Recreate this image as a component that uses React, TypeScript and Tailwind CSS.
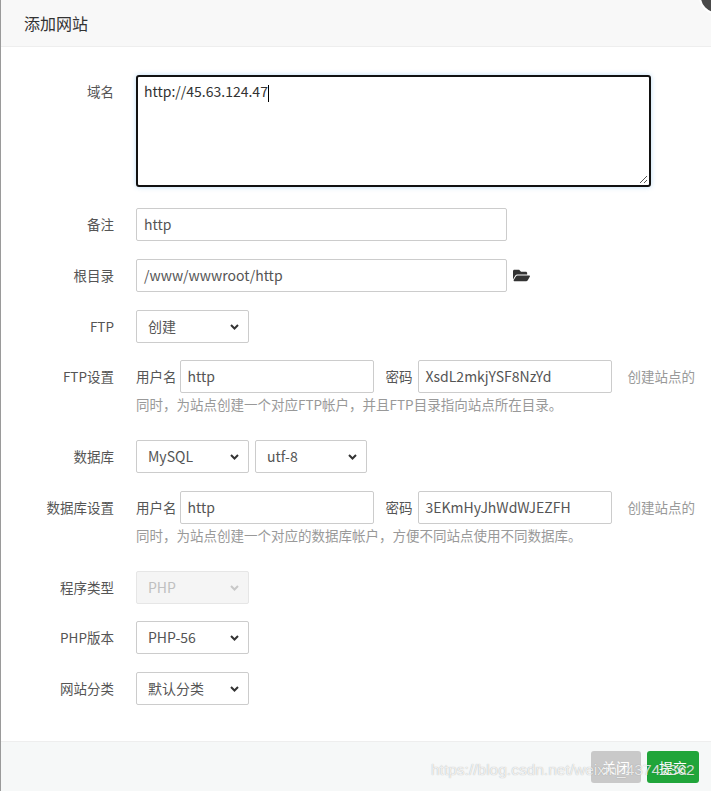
import type { ReactNode } from 'react';
import { FaFolderOpen } from 'react-icons/fa';

const font = "font-['Noto_Sans_CJK_SC','Noto_Sans',sans-serif]";

function Chevron({ muted = false }: { muted?: boolean }) {
  return (
    <svg width="9" height="6" viewBox="0 0 9 6" className="shrink-0">
      <path
        d="M1 1l3.5 3.5L8 1"
        fill="none"
        stroke={muted ? '#c8c8c8' : '#333'}
        strokeWidth="2"
      />
    </svg>
  );
}

function FakeSelect({ value, width = 'w-[113px]', disabled = false }: { value: string; width?: string; disabled?: boolean }) {
  return (
    <div
      className={`${width} h-[33px] flex items-center justify-between pl-[11px] pr-[9px] rounded-[2px] border text-[14px] ${
        disabled ? 'bg-[#f5f5f5] border-[#e6e6e6] text-[#c0c0c0]' : 'bg-white border-[#ccc] text-[#555]'
      }`}
    >
      <span>{value}</span>
      <Chevron muted={disabled} />
    </div>
  );
}

function TextInput({ value, width }: { value: string; width: string }) {
  return (
    <div className={`${width} h-[33px] flex items-center px-[7px] rounded-[2px] border border-[#ccc] bg-white text-[14px] text-[#555]`}>
      {value}
    </div>
  );
}

function Row({ label, children, className = '' }: { label: string; children: ReactNode; className?: string }) {
  return (
    <div className={`flex items-start ${className}`}>
      <div className="w-[113px] h-[33px] flex items-center justify-end text-[13.5px] text-[#555] shrink-0">{label}</div>
      <div className="ml-[22px]">{children}</div>
    </div>
  );
}

function AccountRow({ user, pass, hint }: { user: string; pass: string; hint: string }) {
  return (
    <div>
      <div className="flex items-center text-[13.5px] text-[#555]">
        <span>用户名</span>
        <div className="ml-[3px]">
          <TextInput value={user} width="w-[194px]" />
        </div>
        <span className="ml-[12px]">密码</span>
        <div className="ml-[5px]">
          <TextInput value={pass} width="w-[194px]" />
        </div>
        <span className="ml-[16px] text-[#999] whitespace-nowrap">创建站点的</span>
      </div>
      <div className="text-[13.5px] leading-[22px] text-[#999] whitespace-nowrap">{hint}</div>
    </div>
  );
}

export default function App() {
  return (
    <div className={`relative w-[711px] h-[791px] overflow-hidden bg-white border-l border-[#9a9a9a] ${font}`}>
      {/* header */}
      <div className="h-[47px] bg-[#f8f8f8] border-b border-[#eee] flex items-center pl-[23px] text-[16px] text-[#333]">
        添加网站
      </div>
      <div className="absolute -right-[22px] -top-[20px] w-[34px] h-[34px] rounded-full bg-[#4a4a4a] border-2 border-white" />

      {/* body */}
      <div className="h-[694px]">
        <Row label="域名" className="pt-[28px]">
          <div className="relative w-[515px] h-[112px] rounded-[3px] border-2 border-[#111] shadow-[0_0_5px_rgba(102,175,233,0.45)] px-[6px] pt-[4px] text-[14px] text-[#333]">
            http://45.63.124.47<span className="inline-block align-middle w-px h-[17px] bg-black" />
            <svg width="9" height="9" viewBox="0 0 9 9" className="absolute right-[1px] bottom-[1px]">
              <path d="M8 1L1 8M8 5L5 8" stroke="#555" strokeWidth="1" />
            </svg>
          </div>
        </Row>
        <Row label="备注" className="mt-[21px]">
          <TextInput value="http" width="w-[371px]" />
        </Row>
        <Row label="根目录" className="mt-[18px]">
          <div className="flex items-center">
            <TextInput value="/www/wwwroot/http" width="w-[371px]" />
            <FaFolderOpen className="ml-[6px] text-[#333]" size={17} />
          </div>
        </Row>
        <Row label="FTP" className="mt-[18px]">
          <FakeSelect value="创建" />
        </Row>
        <Row label="FTP设置" className="mt-[17px]">
          <AccountRow user="http" pass="XsdL2mkjYSF8NzYd" hint="同时，为站点创建一个对应FTP帐户，并且FTP目录指向站点所在目录。" />
        </Row>
        <Row label="数据库" className="mt-[25px]">
          <div className="flex gap-[6px]">
            <FakeSelect value="MySQL" />
            <FakeSelect value="utf-8" width="w-[112px]" />
          </div>
        </Row>
        <Row label="数据库设置" className="mt-[18px]">
          <AccountRow user="http" pass="3EKmHyJhWdWJEZFH" hint="同时，为站点创建一个对应的数据库帐户，方便不同站点使用不同数据库。" />
        </Row>
        <Row label="程序类型" className="mt-[25px]">
          <FakeSelect value="PHP" disabled />
        </Row>
        <Row label="PHP版本" className="mt-[17px]">
          <FakeSelect value="PHP-56" />
        </Row>
        <Row label="网站分类" className="mt-[18px]">
          <FakeSelect value="默认分类" />
        </Row>
      </div>

      {/* footer */}
      <div className="h-[50px] bg-[#f6f8f8] border-t border-[#eee] flex justify-end items-start pt-[9px] pr-[12px] gap-[6px]">
        <button className="w-[50px] h-[32px] rounded-[3px] bg-[#c9c9c9] text-white text-[14px]">关闭</button>
        <button className="w-[52px] h-[32px] rounded-[3px] bg-[#20a53a] text-white text-[14px]">提交</button>
      </div>

      {/* watermark */}
      <div className="absolute left-[430px] top-[758px] text-[15.5px] font-['Liberation_Sans',sans-serif] text-white/80 [text-shadow:0_0_1px_rgba(0,0,0,0.35)] pointer-events-none whitespace-nowrap">
        https://blog.csdn.net/weixin_43742362
      </div>
    </div>
  );
}
